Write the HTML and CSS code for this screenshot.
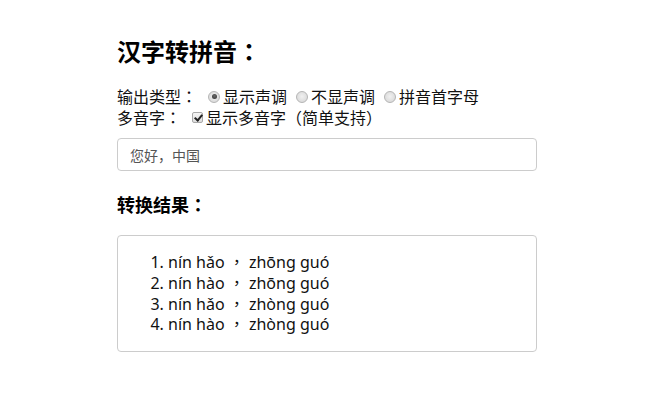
FILE: index.html
```html
<!DOCTYPE html>
<html>
<head>
<meta charset="utf-8">
<title>汉字转拼音</title>
<link rel="stylesheet" href="styles.css">
</head>
<body>
<div class="page">
  <h2 class="title">汉字转拼音：</h2>
  <div class="options">
    <div class="row">
      <span class="label">输出类型：</span>
      <label class="opt"><input type="radio" name="tone" class="radio" checked>显示声调</label>
      <label class="opt"><input type="radio" name="tone" class="radio">不显声调</label>
      <label class="opt"><input type="radio" name="tone" class="radio">拼音首字母</label>
    </div>
    <div class="row">
      <span class="label">多音字：</span>
      <label class="opt"><input type="checkbox" class="check" checked>显示多音字（简单支持）</label>
    </div>
  </div>
  <input class="field" type="text" value="您好，中国">
  <h3 class="subtitle">转换结果：</h3>
  <div class="result">
    <ol class="list">
      <li>nín hǎo ， zhōng guó</li>
      <li>nín hào ， zhōng guó</li>
      <li>nín hǎo ， zhòng guó</li>
      <li>nín hào ， zhòng guó</li>
    </ol>
  </div>
</div>
</body>
</html>
```

FILE: styles.css
```css
html, body {
  margin: 0;
  padding: 0;
  background: #fff;
}
body {
  font-family: "Noto Sans", "Noto Sans CJK TC", sans-serif;
  color: #111;
}
.page {
  width: 420px;
  padding: 28px 0 0 117px;
}
.title {
  margin: 0;
  font-size: 24px;
  font-weight: bold;
  line-height: 46px;
  font-family: "Noto Sans CJK TC", sans-serif;
  color: #000;
}
.options {
  margin-top: 12px;
  font-size: 16px;
  line-height: 21px;
  font-family: "Noto Sans CJK TC", sans-serif;
}
.row {
  display: flex;
  align-items: center;
  height: 21px;
}
.label {
  margin-right: 2px;
}
.opt {
  display: inline-flex;
  align-items: center;
  margin-left: 9px;
}
.radio, .check {
  -webkit-appearance: none;
  appearance: none;
  margin: 0 3px 0 0;
  width: 12px;
  height: 12px;
  flex: none;
  position: relative;
  box-sizing: border-box;
}
.radio {
  border: 1px solid #b5b5b5;
  border-radius: 50%;
  background: radial-gradient(circle at 50% 45%, #f0f0f0 0%, #d4d4d4 100%);
}
.radio:checked::after {
  content: "";
  position: absolute;
  left: 2.5px;
  top: 2.5px;
  width: 5px;
  height: 5px;
  border-radius: 50%;
  background: radial-gradient(circle at 50% 40%, #6a6a6a 0%, #2e2e2e 100%);
}
.check {
  width: 11px;
  height: 11px;
  border: 1px solid #a8a8a8;
  border-radius: 2px;
  background: linear-gradient(#f4f4f4, #dedede);
}
.check:checked::after {
  content: "";
  position: absolute;
  left: 3px;
  top: 0;
  width: 3px;
  height: 6px;
  border: solid #222;
  border-width: 0 2px 2px 0;
  transform: rotate(40deg);
}
.field {
  display: block;
  box-sizing: border-box;
  width: 420px;
  height: 33px;
  margin-top: 10px;
  padding: 6px 12px;
  border: 1px solid #ccc;
  border-radius: 4px;
  font-size: 14px;
  font-family: "Noto Sans CJK SC", sans-serif;
  color: #555;
  outline: none;
}
.subtitle {
  margin: 18px 0 0;
  font-size: 18px;
  line-height: 30px;
  font-weight: bold;
  color: #000;
  font-family: "Noto Sans CJK TC", sans-serif;
}
.result {
  margin-top: 16px;
  width: 420px;
  box-sizing: border-box;
  border: 1px solid #ccc;
  border-radius: 4px;
  padding: 0 10px;
}
.list {
  margin: 16px 0;
  padding-left: 40px;
  font-size: 16px;
  line-height: 20.75px;
  color: #111;
}
```
